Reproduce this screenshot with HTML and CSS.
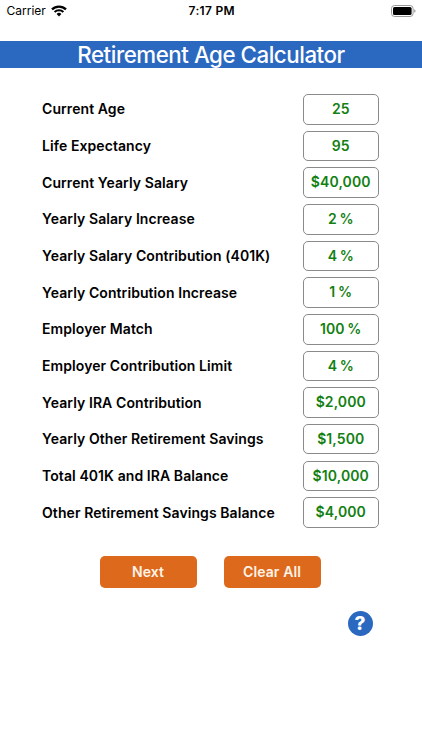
FILE: index.html
```html
<!DOCTYPE html>
<html lang="en">
<head>
  <meta charset="UTF-8">
  <meta name="viewport" content="width=device-width, initial-scale=1.0">
  <title>Retirement Age Calculator</title>

  <link rel="stylesheet" href="styles.css">
</head>
<body>
  <div class="status-bar">
    <div class="carrier">
      <span>Carrier</span>
      <svg class="wifi" width="16" height="12" viewBox="0 0 16 12">
        <path d="M1 4.4a10 10 0 0 1 14 0" fill="none" stroke="#000" stroke-width="2.3"/>
        <path d="M3.6 7a6.3 6.3 0 0 1 8.8 0" fill="none" stroke="#000" stroke-width="2.1"/>
        <path d="M8 11.4L5.6 9a3.4 3.4 0 0 1 4.8 0z"/>
      </svg>
    </div>
    <span class="time">7:17 PM</span>
    <svg class="battery" width="26" height="12" viewBox="0 0 26 12">
      <rect x="0.5" y="0.5" width="21.6" height="11" rx="3" fill="none" stroke="#999"/>
      <rect x="2" y="2" width="18.6" height="8" rx="1.6"/>
      <path d="M23.2 4.2q1.4 0.5 1.4 1.8t-1.4 1.8z" fill="#999"/>
    </svg>
  </div>

  <h1>Retirement Age Calculator</h1>

  <form class="fields">
    <div class="field"><span class="label">Current Age</span><span class="value">25</span></div>
    <div class="field"><span class="label">Life Expectancy</span><span class="value">95</span></div>
    <div class="field"><span class="label">Current Yearly Salary</span><span class="value">$40,000</span></div>
    <div class="field"><span class="label">Yearly Salary Increase</span><span class="value percent">2 %</span></div>
    <div class="field"><span class="label">Yearly Salary Contribution (401K)</span><span class="value percent">4 %</span></div>
    <div class="field"><span class="label">Yearly Contribution Increase</span><span class="value percent">1 %</span></div>
    <div class="field"><span class="label">Employer Match</span><span class="value percent">100 %</span></div>
    <div class="field"><span class="label">Employer Contribution Limit</span><span class="value percent">4 %</span></div>
    <div class="field"><span class="label">Yearly IRA Contribution</span><span class="value">$2,000</span></div>
    <div class="field"><span class="label">Yearly Other Retirement Savings</span><span class="value">$1,500</span></div>
    <div class="field"><span class="label">Total 401K and IRA Balance</span><span class="value">$10,000</span></div>
    <div class="field"><span class="label">Other Retirement Savings Balance</span><span class="value">$4,000</span></div>
  </form>

  <div class="buttons">
    <button>Next</button>
    <button>Clear All</button>
  </div>

  <div class="help-row">
    <button class="help">?</button>
  </div>
</body>
</html>
```

FILE: styles.css
```css
body {
  margin: 0;
  background: #ffffff;
  color: #000000;
  font-family: Inter, "Liberation Sans", sans-serif;
}

.status-bar {
  display: grid;
  grid-template-columns: 1fr auto 1fr;
  align-items: center;
  height: 21px;
  padding: 0 5px 0 6.5px;
  font-size: 12px;
}

.carrier {
  display: flex;
  align-items: center;
  gap: 5px;
}

.time {
  font-weight: 600;
  letter-spacing: 0.3px;
}

.battery {
  justify-self: end;
}

h1 {
  height: 27px;
  margin: 20px 0 0;
  background: #2b68c0;
  color: #ffffff;
  font-size: 22.3px;
  font-weight: 500;
  letter-spacing: -0.45px;
  line-height: 27px;
  text-align: center;
}

.fields {
  display: flex;
  flex-direction: column;
  gap: 6.15px;
  padding: 26.2px 43px 0 42px;
}

.field {
  display: flex;
  justify-content: space-between;
  align-items: center;
  height: 30.5px;
}

.label {
  padding-bottom: 0.9px;
  font-size: 14px;
  font-weight: 600;
  letter-spacing: 0.08px;
  white-space: nowrap;
}

.value {
  box-sizing: border-box;
  width: 76.5px;
  height: 30.5px;
  border: 1px solid #8a8a8a;
  border-radius: 5px;
  color: #128012;
  font-size: 14px;
  font-weight: 600;
  letter-spacing: 0.1px;
  line-height: 28.6px;
  text-align: center;
}

.percent {
  word-spacing: -1px;
}

.buttons {
  display: flex;
  justify-content: center;
  gap: 27px;
  margin-top: 27.8px;
  padding-right: 2px;
}

button {
  width: 97px;
  height: 32.5px;
  padding: 0;
  border: 0;
  border-radius: 5px;
  background: #dc691c;
  color: #fff3e6;
  font-family: inherit;
  font-size: 14px;
  font-weight: 600;
  letter-spacing: 0.1px;
  cursor: pointer;
}

.help-row {
  display: flex;
  justify-content: flex-end;
  padding: 22.7px 49.5px 0 0;
}

.help {
  width: 25px;
  height: 25px;
  border-radius: 50%;
  background: #2b68c0;
  color: #ffffff;
  font-size: 19px;
  font-weight: 800;
}
```
